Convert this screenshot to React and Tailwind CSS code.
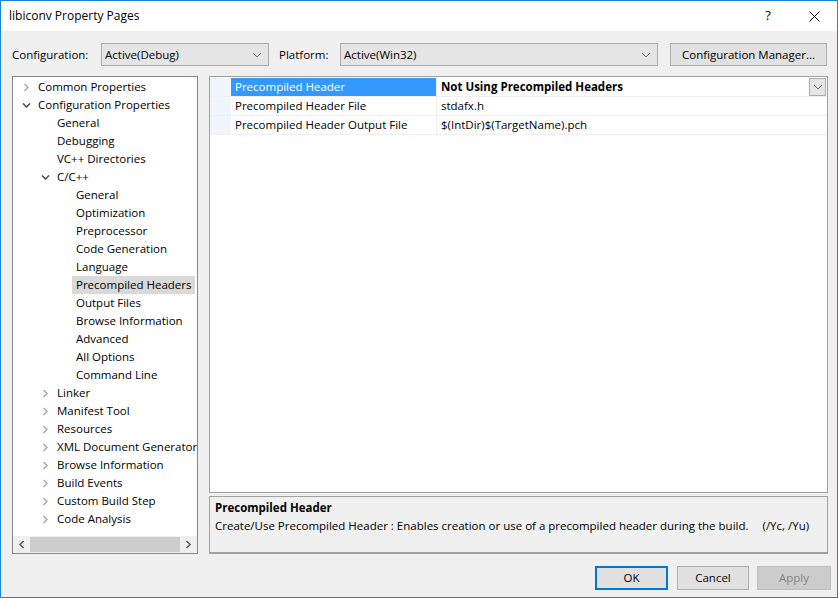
import React from "react";

const font = { fontFamily: '"Open Sans", "Noto Sans", sans-serif' };

const tree = [
  { label: "Common Properties", level: 0, chevron: "right" },
  { label: "Configuration Properties", level: 0, chevron: "down" },
  { label: "General", level: 1 },
  { label: "Debugging", level: 1 },
  { label: "VC++ Directories", level: 1 },
  { label: "C/C++", level: 1, chevron: "down" },
  { label: "General", level: 2 },
  { label: "Optimization", level: 2 },
  { label: "Preprocessor", level: 2 },
  { label: "Code Generation", level: 2 },
  { label: "Language", level: 2 },
  { label: "Precompiled Headers", level: 2, selected: true },
  { label: "Output Files", level: 2 },
  { label: "Browse Information", level: 2 },
  { label: "Advanced", level: 2 },
  { label: "All Options", level: 2 },
  { label: "Command Line", level: 2 },
  { label: "Linker", level: 1, chevron: "right" },
  { label: "Manifest Tool", level: 1, chevron: "right" },
  { label: "Resources", level: 1, chevron: "right" },
  { label: "XML Document Generator", level: 1, chevron: "right" },
  { label: "Browse Information", level: 1, chevron: "right" },
  { label: "Build Events", level: 1, chevron: "right" },
  { label: "Custom Build Step", level: 1, chevron: "right" },
  { label: "Code Analysis", level: 1, chevron: "right" },
];

const indent = ["pl-[9px]", "pl-[28px]", "pl-[47px]"];

function Chevron({ dir }) {
  if (dir === "down") {
    return (
      <svg width="9" height="9" viewBox="0 0 9 9">
        <path d="M1 2.5 L4.5 6 L8 2.5" fill="none" stroke="#404040" strokeWidth="1.4" />
      </svg>
    );
  }
  return (
    <svg width="9" height="9" viewBox="0 0 9 9">
      <path d="M2.5 1 L6 4.5 L2.5 8" fill="none" stroke="#a6a6a6" strokeWidth="1.4" />
    </svg>
  );
}

function ComboArrow() {
  return (
    <svg width="10" height="6" viewBox="0 0 10 6">
      <path d="M1 1 L5 5 L9 1" fill="none" stroke="#707070" strokeWidth="1" />
    </svg>
  );
}

function Combo({ value, className }) {
  return (
    <div
      className={`flex h-[23px] items-center justify-between border border-[#acacac] bg-[#e5e5e5] pl-[3px] pr-[6px] text-black ${className}`}
    >
      <span>{value}</span>
      <ComboArrow />
    </div>
  );
}

function TreeRow({ item }) {
  return (
    <div className={`flex h-[18px] items-center ${indent[item.level]}`}>
      <div className="flex w-[16px] shrink-0 items-center">
        {item.chevron && <Chevron dir={item.chevron} />}
      </div>
      <span
        className={`whitespace-nowrap leading-[18px] ${item.selected ? "-ml-[4px] bg-[#d9d9d9] pl-[4px] pr-[4px]" : ""}`}
      >
        {item.label}
      </span>
    </div>
  );
}

function PropRow({ name, value, selected }) {
  return (
    <div className="flex h-[19px] border-b border-[#f0f0f0]">
      <div className="w-[21px] shrink-0 bg-[#f0f5fc]" />
      <div
        className={`flex w-[205px] shrink-0 items-center pl-[4px] ${selected ? "bg-[#3399ff] text-white" : ""}`}
      >
        {name}
      </div>
      <div className="flex flex-1 items-center justify-between border-l border-[#f0f0f0] pl-[4px]">
        <span className={selected ? "font-bold" : ""}>{value}</span>
        {selected && (
          <div className="mr-[1px] flex h-[18px] w-[17px] items-center justify-center border border-[#acacac] bg-[#e5e5e5]">
            <ComboArrow />
          </div>
        )}
      </div>
    </div>
  );
}

function Button({ children, variant, className }) {
  const styles = {
    primary: "border-2 border-[#0078d7] bg-[#e1e1e1] text-black",
    normal: "border border-[#adadad] bg-[#e1e1e1] text-black",
    disabled: "border border-[#bfbfbf] bg-[#cccccc] text-[#838383]",
  };
  return (
    <div className={`flex h-[24px] items-center justify-center ${styles[variant]} ${className}`}>
      {children}
    </div>
  );
}

export default function App() {
  return (
    <div
      className="flex h-[598px] w-[838px] flex-col overflow-hidden border border-[#1883d7] bg-[#f0f0f0] text-[11.5px] text-black"
      style={font}
    >
      {/* Barre de titre */}
      <div className="flex h-[30px] shrink-0 items-center justify-between bg-white pl-[8px]">
        <span className="text-[12px]">libiconv Property Pages</span>
        <div className="flex h-full items-center">
          <span className="w-[46px] text-center text-[13px]">?</span>
          <div className="flex w-[46px] items-center justify-center">
            <svg width="11" height="11" viewBox="0 0 11 11">
              <path d="M0.5 0.5 L10.5 10.5 M10.5 0.5 L0.5 10.5" stroke="#000" strokeWidth="1" />
            </svg>
          </div>
        </div>
      </div>

      {/* Configuration / plateforme */}
      <div className="mt-[12px] flex h-[23px] shrink-0 items-center pl-[11px]">
        <span className="w-[89px]">Configuration:</span>
        <Combo value="Active(Debug)" className="w-[168px]" />
        <span className="ml-[10px] w-[61px]">Platform:</span>
        <Combo value="Active(Win32)" className="w-[318px]" />
        <div className="ml-[12px] flex h-[23px] w-[157px] items-center justify-center border border-[#adadad] bg-[#e1e1e1]">
          Configuration Manager...
        </div>
      </div>

      {/* Contenu principal */}
      <div className="mt-[10px] flex h-[478px] shrink-0 pl-[11px]">
        {/* Arbre */}
        <div className="flex w-[186px] shrink-0 flex-col border border-[#828790] bg-white">
          <div className="flex-1 overflow-hidden pt-[1px]">
            {tree.map((item, i) => (
              <TreeRow key={i} item={item} />
            ))}
          </div>
          <div className="flex h-[17px] shrink-0 items-center bg-[#f0f0f0]">
            <div className="flex w-[17px] items-center justify-center">
              <svg width="7" height="9" viewBox="0 0 7 9">
                <path d="M5.5 1 L2 4.5 L5.5 8" fill="none" stroke="#606060" strokeWidth="1.6" />
              </svg>
            </div>
            <div className="h-[15px] flex-1 bg-[#cdcdcd]" />
            <div className="flex w-[17px] items-center justify-center">
              <svg width="7" height="9" viewBox="0 0 7 9">
                <path d="M1.5 1 L5 4.5 L1.5 8" fill="none" stroke="#606060" strokeWidth="1.6" />
              </svg>
            </div>
          </div>
        </div>

        {/* Grille de propriétés + description */}
        <div className="ml-[11px] flex w-[619px] flex-col">
          <div className="h-[417px] border border-[#a0a0a0] bg-white pt-[1px]">
            <PropRow name="Precompiled Header" value="Not Using Precompiled Headers" selected />
            <PropRow name="Precompiled Header File" value="stdafx.h" />
            <PropRow name="Precompiled Header Output File" value="$(IntDir)$(TargetName).pch" />
          </div>
          <div className="mt-[3px] flex-1 border border-b-2 border-[#a0a0a0] bg-[#f0f0f0] px-[5px] pt-[2px]">
            <div className="font-bold leading-[18px]">Precompiled Header</div>
            <div className="whitespace-nowrap leading-[18px]">
              Create/Use Precompiled Header : Enables creation or use of a precompiled header during the build.
              <span className="ml-[14px]">(/Yc, /Yu)</span>
            </div>
          </div>
        </div>
      </div>

      {/* Boutons */}
      <div className="mt-[12px] flex justify-end pr-[6px]">
        <Button variant="primary" className="w-[73px]">OK</Button>
        <Button variant="normal" className="ml-[9px] w-[72px]">Cancel</Button>
        <Button variant="disabled" className="ml-[8px] w-[74px]">Apply</Button>
      </div>
    </div>
  );
}
